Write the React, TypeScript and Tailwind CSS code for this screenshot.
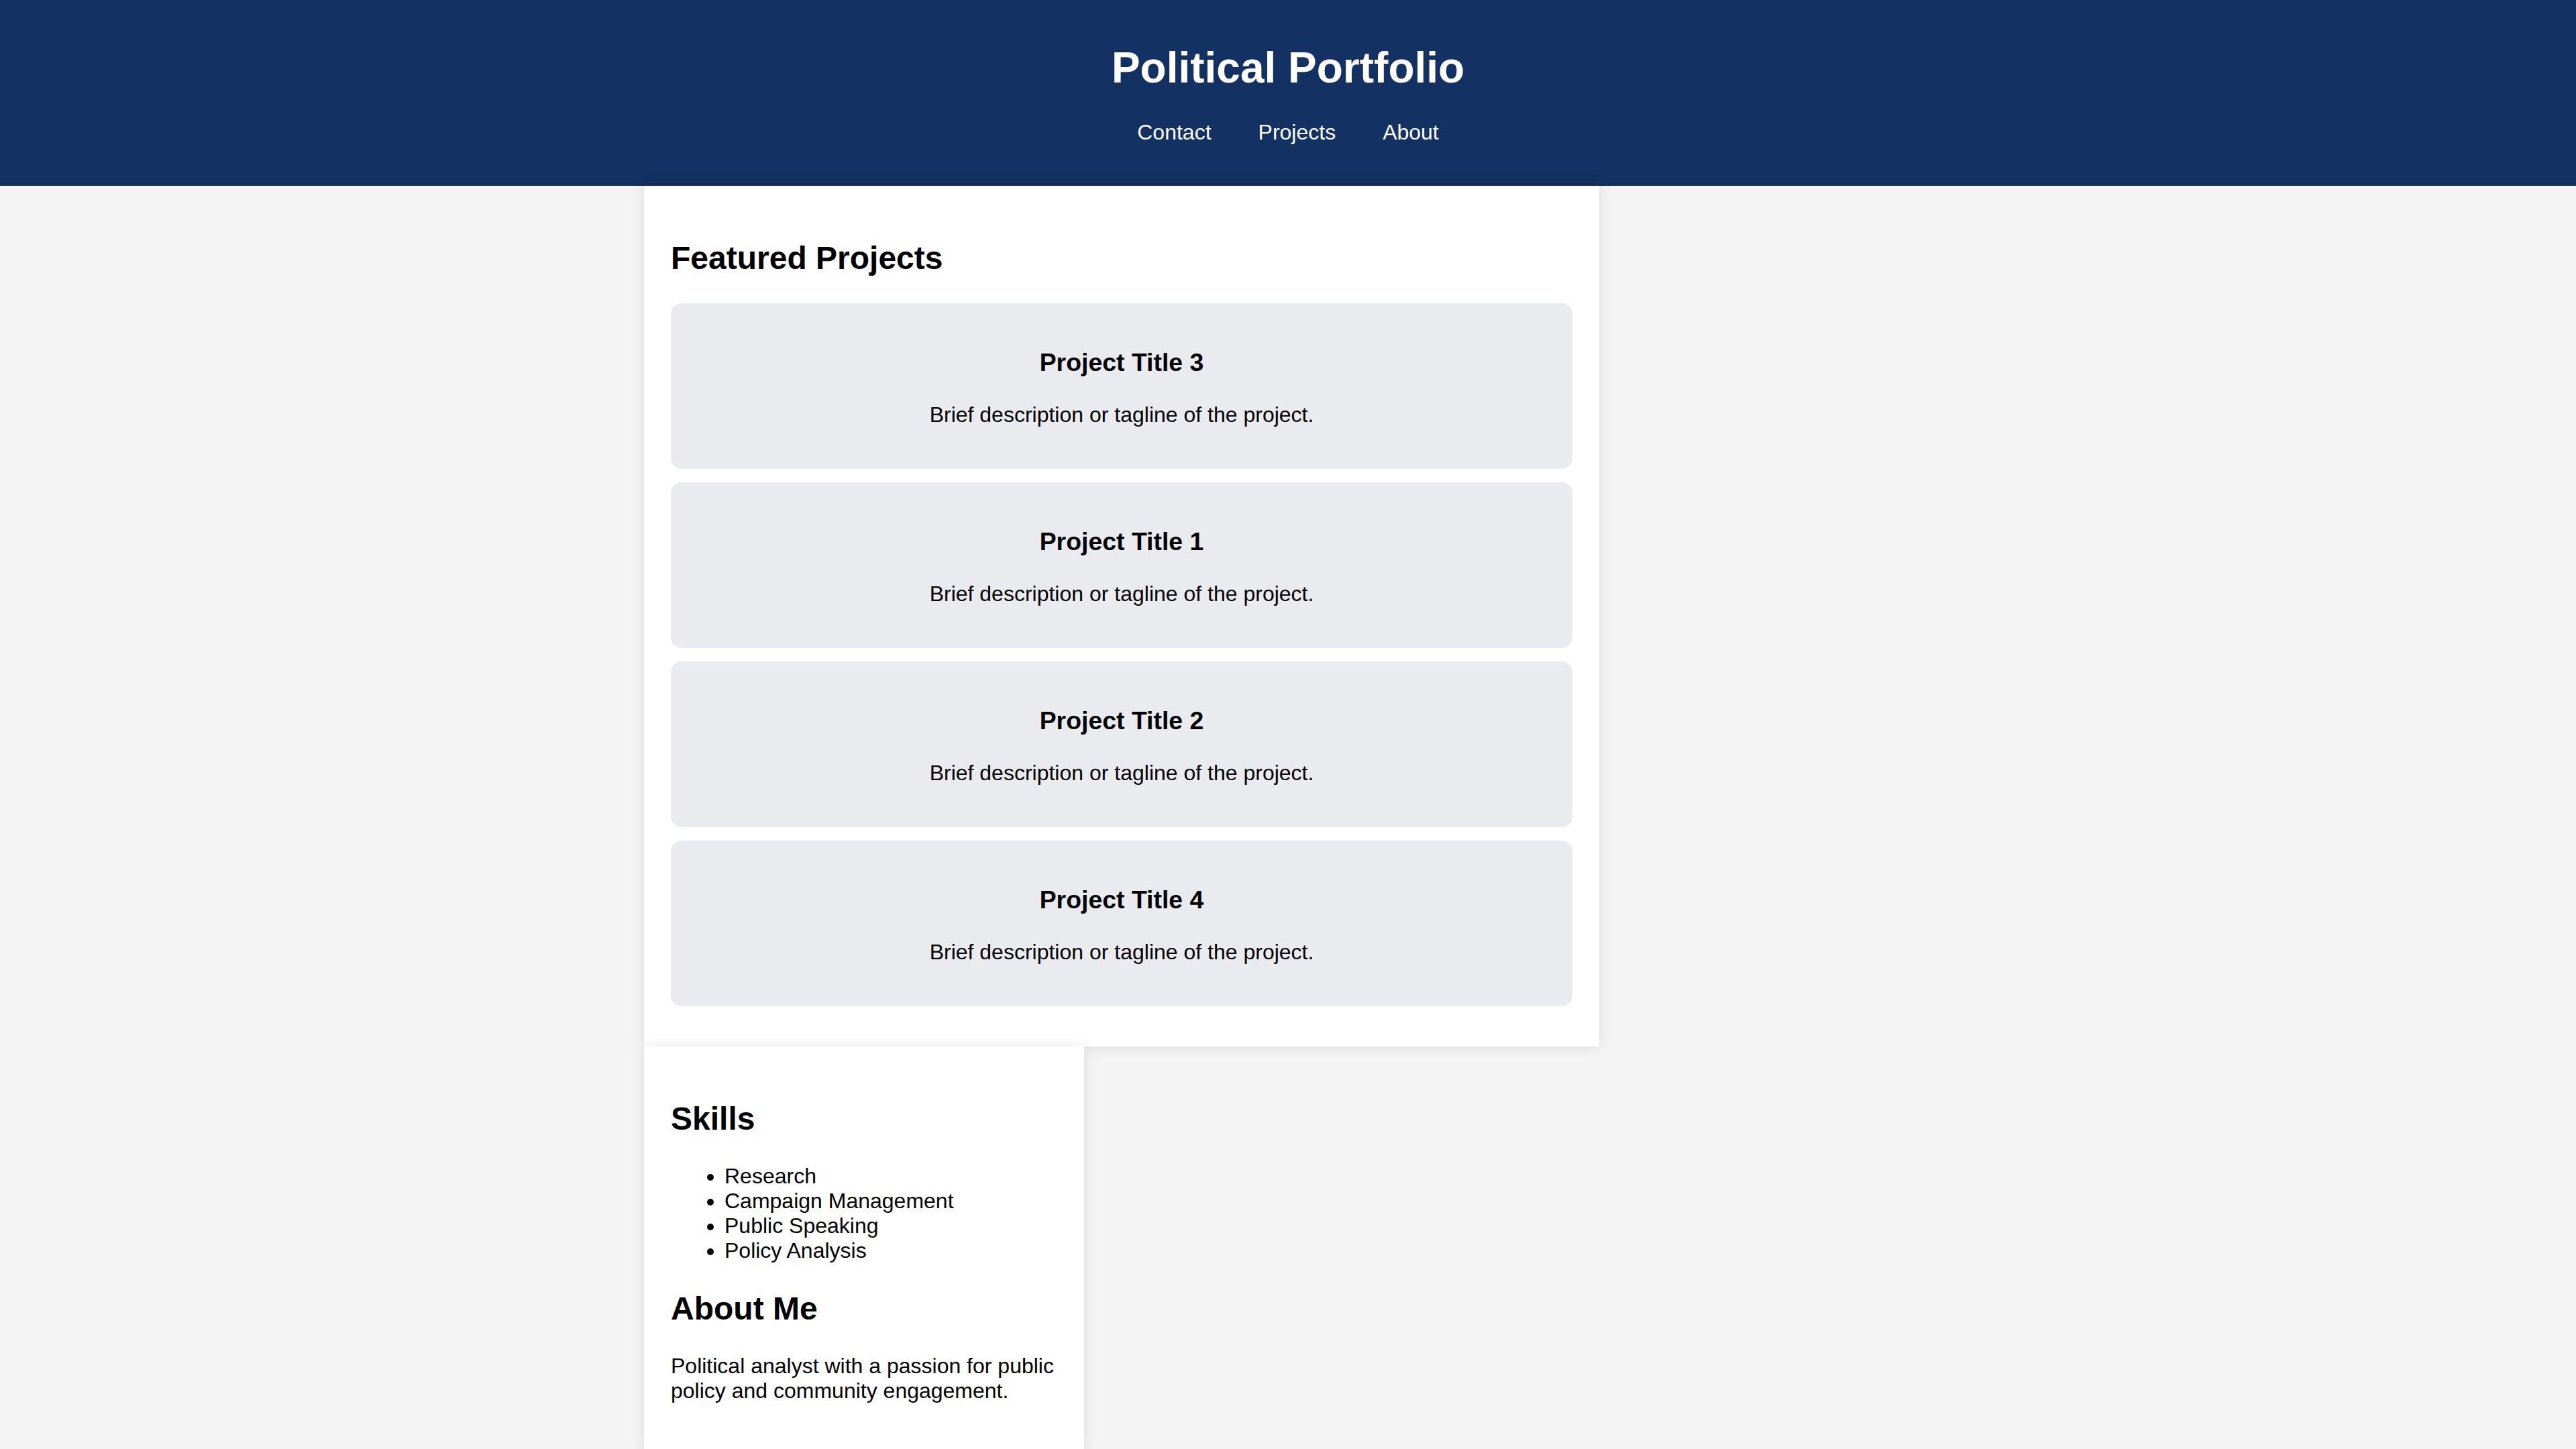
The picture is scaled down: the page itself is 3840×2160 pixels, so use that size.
import React from 'react';

const projects = [
  { title: 'Project Title 3', desc: 'Brief description or tagline of the project.' },
  { title: 'Project Title 1', desc: 'Brief description or tagline of the project.' },
  { title: 'Project Title 2', desc: 'Brief description or tagline of the project.' },
  { title: 'Project Title 4', desc: 'Brief description or tagline of the project.' },
];

const skills = ['Research', 'Campaign Management', 'Public Speaking', 'Policy Analysis'];

const ProjectCard: React.FC<{ title: string; desc: string }> = ({ title, desc }) => (
  <div className="bg-[#eaebef] rounded-[16px] p-[30px] mb-[20px] text-center">
    <h3 className="text-[37.44px] font-bold leading-[normal] my-[37.44px]">{title}</h3>
    <p className="text-[32px] leading-[normal] my-[32px]">{desc}</p>
  </div>
);

export default function App() {
  return (
    <div
      className="min-h-screen bg-[#f4f4f4] text-black"
      style={{ fontFamily: '"Liberation Sans", Arial, sans-serif' }}
    >
      {/* Header */}
      <header className="bg-[#133263] text-white text-center pt-[64px] pb-[61px]">
        <h1 className="text-[64px] font-bold leading-[normal]">Political Portfolio</h1>
        <nav className="mt-[41px]">
          <ul className="flex justify-center gap-[70px] text-[32px] leading-[normal]">
            <li>Contact</li>
            <li>Projects</li>
            <li>About</li>
          </ul>
        </nav>
      </header>

      <main className="w-[1920px] mx-auto flex flex-col items-start">
        {/* Featured Projects */}
        <section className="relative w-[1424px] bg-white p-[40px] shadow-[0_0_20px_rgba(0,0,0,0.1)]">
          <h2 className="text-[48px] font-bold leading-[normal] mt-[40px] mb-[40px]">Featured Projects</h2>
          {projects.map((p) => (
            <ProjectCard key={p.title} title={p.title} desc={p.desc} />
          ))}
        </section>

        {/* Sidebar */}
        <aside className="relative w-[656px] bg-white p-[40px] shadow-[0_0_20px_rgba(0,0,0,0.1)]">
          <h2 className="text-[48px] font-bold leading-[normal] my-[40px]">Skills</h2>
          <ul className="list-disc pl-[80px] my-[32px] text-[32px] leading-[normal]">
            {skills.map((s) => (
              <li key={s}>{s}</li>
            ))}
          </ul>
          <h2 className="text-[48px] font-bold leading-[normal] my-[40px]">About Me</h2>
          <p className="text-[32px] leading-[normal] my-[32px]">
            Political analyst with a passion for public policy and community engagement.
          </p>
        </aside>
      </main>
    </div>
  );
}
